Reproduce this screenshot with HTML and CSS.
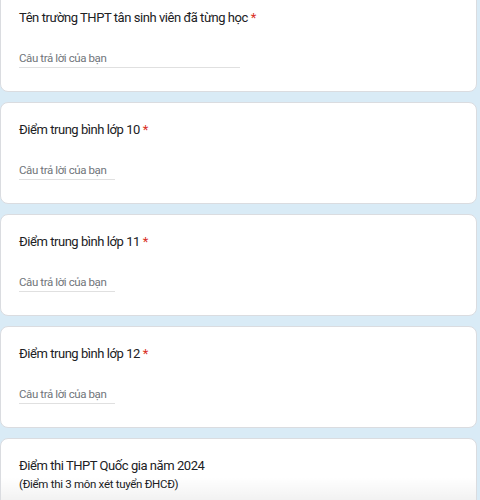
FILE: index.html
```html
<!DOCTYPE html>
<html>
<head>
  <title>Form</title>
  <link rel="stylesheet" href="styles.css">
</head>
<body>
  <div class="form-list">
    <div class="card">
      <div class="question">Tên trường THPT tân sinh viên đã từng học <span class="req">*</span></div>
      <div class="answer wide">Câu trả lời của bạn</div>
    </div>
    <div class="card">
      <div class="question">Điểm trung bình lớp 10 <span class="req">*</span></div>
      <div class="answer">Câu trả lời của bạn</div>
    </div>
    <div class="card">
      <div class="question">Điểm trung bình lớp 11 <span class="req">*</span></div>
      <div class="answer">Câu trả lời của bạn</div>
    </div>
    <div class="card">
      <div class="question">Điểm trung bình lớp 12 <span class="req">*</span></div>
      <div class="answer">Câu trả lời của bạn</div>
    </div>
    <div class="card last">
      <div class="question">Điểm thi THPT Quốc gia năm 2024</div>
      <div class="desc">(Điểm thi 3 môn xét tuyển ĐHCĐ)</div>
    </div>
  </div>
</body>
</html>
```
FILE: styles.css
```css
body {
  margin: 0;
  background-color: #d9ebf6;
  font-family: Roboto, Arial, sans-serif;
  overflow: hidden;
}

.form-list {
  margin-top: -10px;
  width: 477px;
  display: flex;
  flex-direction: column;
  gap: 10px;
}

.card {
  background-color: #fff;
  border: 1px solid #dadce0;
  border-radius: 8px;
  padding: 17px 18px 24px 18px;
  height: 102px;
  box-sizing: border-box;
  position: relative;
}

.question {
  font-size: 13px;
  letter-spacing: -0.45px;
  line-height: 20px;
  color: #202124;
}

.req {
  color: #d93025;
}

.answer {
  margin-top: 21px;
  width: 96px;
  font-size: 11.5px;
  letter-spacing: -0.4px;
  line-height: 18px;
  color: #70757a;
  border-bottom: 1px solid #e0e0e0;
  white-space: nowrap;
}

.answer.wide {
  width: 221px;
}

.desc {
  font-size: 11.5px;
  letter-spacing: -0.3px;
  line-height: 16px;
  color: #202124;
}

.last {
  height: 80px;
}

.last::after {
  content: '';
  position: absolute;
  left: 0;
  right: 0;
  bottom: 0;
  height: 40px;
  background: linear-gradient(to bottom, rgba(0, 0, 0, 0), rgba(0, 0, 0, 0.09));
  pointer-events: none;
}
```
